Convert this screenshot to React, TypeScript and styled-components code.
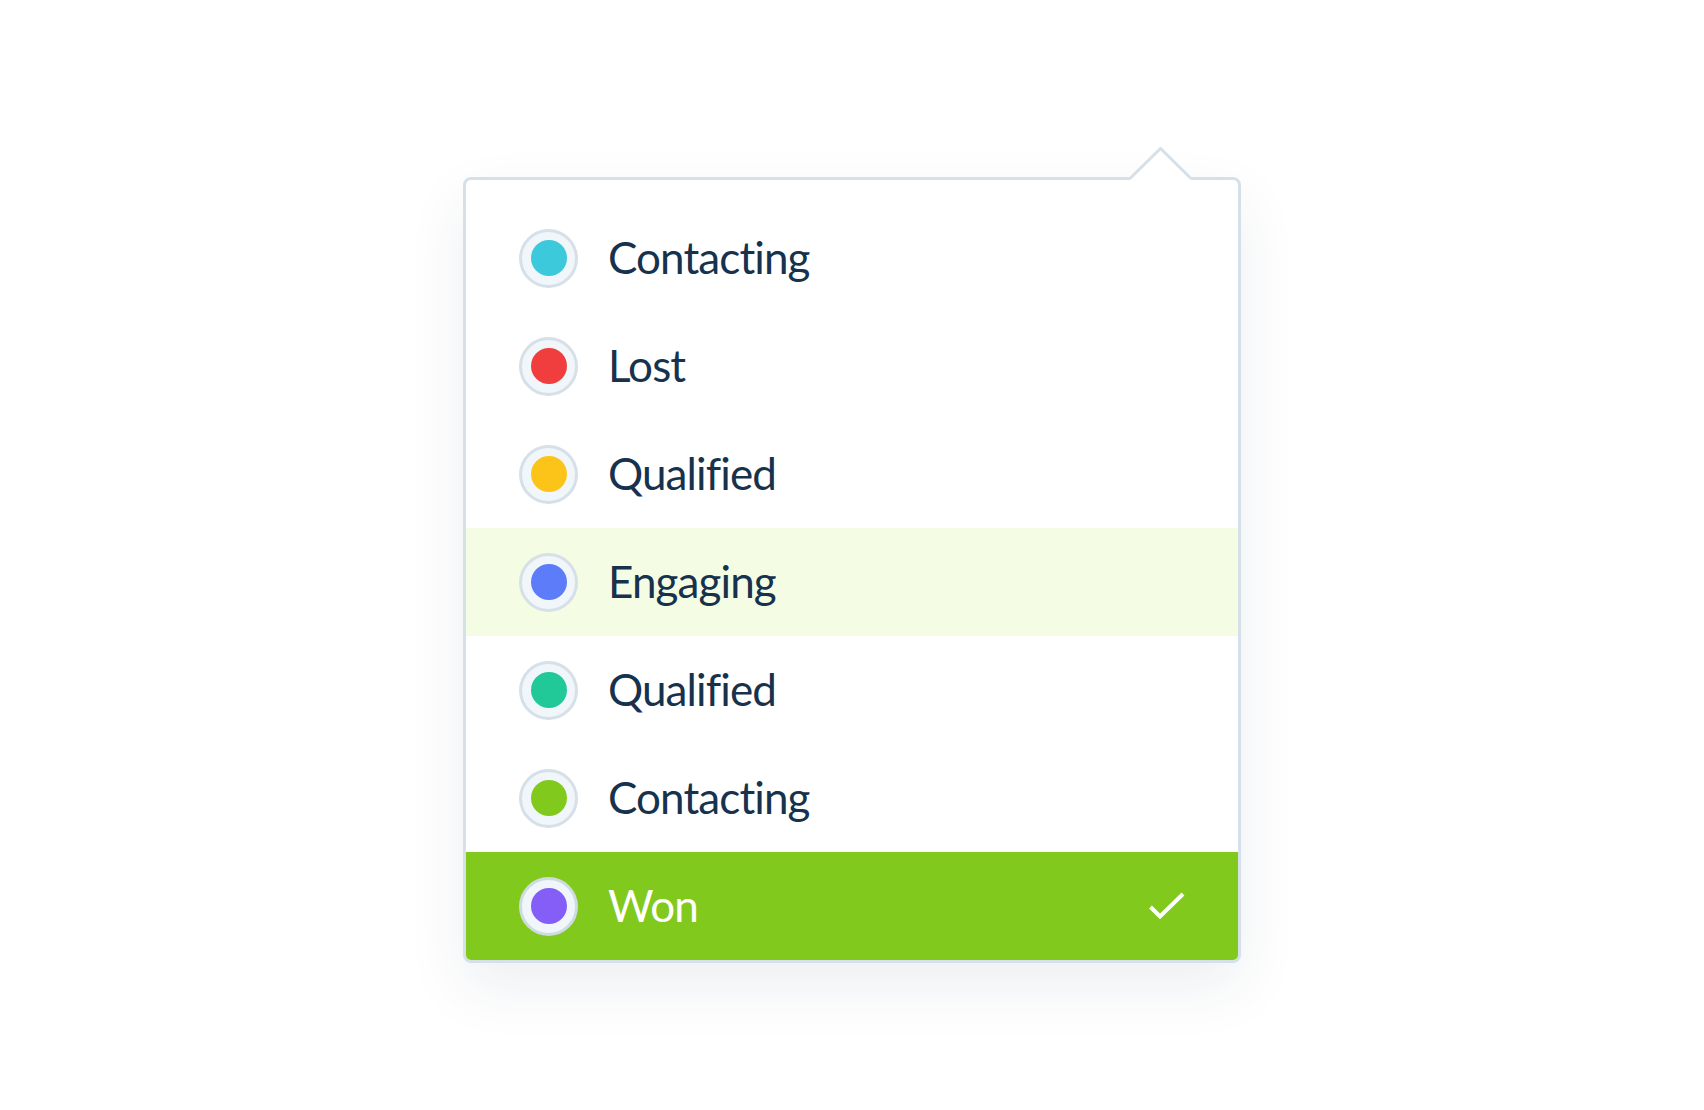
import React from "react";
import styled, { createGlobalStyle } from "styled-components";

const GlobalStyle = createGlobalStyle`
  html, body {
    margin: 0;
    padding: 0;
    background: #ffffff;
  }
  body {
    font-family: "Lato", "Noto Sans", sans-serif;
  }
`;

type Option = { label: string; color: string; state?: "hover" | "selected" };

const options: Option[] = [
  { label: "Contacting", color: "#3bc9db" },
  { label: "Lost", color: "#f03e3e" },
  { label: "Qualified", color: "#fcc419" },
  { label: "Engaging", color: "#5c7cfa", state: "hover" },
  { label: "Qualified", color: "#20c997" },
  { label: "Contacting", color: "#82c91e" },
  { label: "Won", color: "#845ef7", state: "selected" },
];

function App() {
  return (
    <Page>
      <GlobalStyle />
      <Popover>
        <Caret width="62" height="34" viewBox="0 0 62 34">
          <path d="M0.5 34 L0.5 31.5 L30.5 1.5 L60.5 31.5 L60.5 34 Z" fill="#ffffff" />
          <polyline
            points="0,31.5 30.5,1.5 61,31.5"
            fill="none"
            stroke="#d6e0e8"
            strokeWidth="3"
          />
        </Caret>
        <List>
          {options.map((o, i) => (
            <Row key={i} $state={o.state}>
              <Radio $selected={o.state === "selected"}>
                <Dot $color={o.color} />
              </Radio>
              <Label $selected={o.state === "selected"}>{o.label}</Label>
              {o.state === "selected" && (
                <Check width="36" height="28" viewBox="0 0 36 28">
                  <polyline
                    points="1.5,15 11,24.5 34,2"
                    fill="none"
                    stroke="#ffffff"
                    strokeWidth="4"
                  />
                </Check>
              )}
            </Row>
          ))}
        </List>
      </Popover>
    </Page>
  );
}

const Page = styled.div`
  display: flex;
  justify-content: center;
  align-items: flex-start;
  min-height: 1110px;
  padding-top: 177px;
  box-sizing: border-box;
`;

const Popover = styled.div`
  position: relative;
  width: 778px;
  box-sizing: border-box;
  border: 3px solid #d6e0e8;
  border-radius: 8px;
  background: #ffffff;
  box-shadow: 0 24px 60px rgba(24, 48, 80, 0.08);
`;

const Caret = styled.svg`
  position: absolute;
  top: -33px;
  right: 46px;
  display: block;
`;

const List = styled.div`
  display: flex;
  flex-direction: column;
  padding-top: 24px;
  border-radius: 5px;
  overflow: hidden;
`;

const Row = styled.div<{ $state?: "hover" | "selected" }>`
  display: flex;
  align-items: center;
  height: 108px;
  padding: 0 53px;
  gap: 30px;
  background: ${(p) =>
    p.$state === "selected" ? "#82c91e" : p.$state === "hover" ? "#f4fce3" : "transparent"};
`;

const Radio = styled.div<{ $selected?: boolean }>`
  flex: none;
  width: 59px;
  height: 59px;
  box-sizing: border-box;
  border-radius: 50%;
  border: 3px solid ${(p) => (p.$selected ? "#cfdbe3" : "#d6e0e8")};
  background: #f0f6f9;
  display: flex;
  align-items: center;
  justify-content: center;
`;

const Dot = styled.div<{ $color: string }>`
  width: 36px;
  height: 36px;
  border-radius: 50%;
  background: ${(p) => p.$color};
`;

const Label = styled.span<{ $selected?: boolean }>`
  flex: 1;
  font-family: "Lato", "Noto Sans", sans-serif;
  font-size: 44px;
  letter-spacing: -0.9px;
  font-variant-ligatures: none;
  margin-bottom: 2px;
  color: ${(p) => (p.$selected ? "#ffffff" : "#17324d")};
`;

const Check = styled.svg`
  flex: none;
  display: block;
`;

export default App;
